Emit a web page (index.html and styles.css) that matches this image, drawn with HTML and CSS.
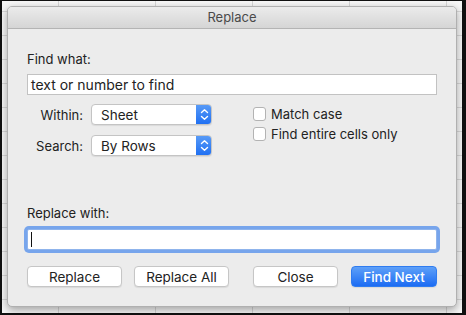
FILE: index.html
```html
<!DOCTYPE html>
<html lang="en">
<head>
    <meta charset="UTF-8">
    <title>Replace</title>
    <link rel="stylesheet" href="styles.css">
</head>
<body>
    <div class="screen">
        <div class="dialog">
            <div class="titlebar">Replace</div>
            <div class="dialog-body">
                <div class="label">Find what:</div>
                <div class="field">text or number to find</div>

                <div class="options">
                    <div class="selects">
                        <span class="opt-label">Within:</span>
                        <div class="select">
                            <span>Sheet</span>
                            <span class="stepper">
                                <svg width="9" height="13" viewBox="0 0 9 13"><path d="M1.5 4.5 L4.5 1.8 L7.5 4.5 M1.5 8.5 L4.5 11.2 L7.5 8.5" fill="none" stroke="#fff" stroke-width="1.4" stroke-linecap="round" stroke-linejoin="round"/></svg>
                            </span>
                        </div>
                        <span class="opt-label">Search:</span>
                        <div class="select">
                            <span>By Rows</span>
                            <span class="stepper">
                                <svg width="9" height="13" viewBox="0 0 9 13"><path d="M1.5 4.5 L4.5 1.8 L7.5 4.5 M1.5 8.5 L4.5 11.2 L7.5 8.5" fill="none" stroke="#fff" stroke-width="1.4" stroke-linecap="round" stroke-linejoin="round"/></svg>
                            </span>
                        </div>
                    </div>
                    <div class="checks">
                        <label class="check"><span class="box"></span>Match case</label>
                        <label class="check"><span class="box"></span>Find entire cells only</label>
                    </div>
                </div>

                <div class="label replace-label">Replace with:</div>
                <div class="field focused"><span class="caret"></span></div>

                <div class="buttons">
                    <div class="btn-group">
                        <button class="btn wide">Replace</button>
                        <button class="btn wide">Replace All</button>
                    </div>
                    <div class="btn-group right">
                        <button class="btn">Close</button>
                        <button class="btn primary">Find Next</button>
                    </div>
                </div>
            </div>
        </div>
    </div>
</body>
</html>
```

FILE: styles.css
```css
/* Generale */
body {
    margin: 0;
    font-family: Inter, "Noto Sans", sans-serif;
    font-size: 13px;
    color: #222;
}

.screen {
    box-sizing: border-box;
    width: 466px;
    height: 315px;
    border-style: solid;
    border-color: #111;
    border-width: 1px 4px 2px 2px;
    padding: 5px 0 0 5px;
    background-color: #f7f7f7;
    background-image:
        repeating-linear-gradient(to right, transparent 0, transparent 56px, #d6d6d6 56px, #d6d6d6 57px, transparent 57px, transparent 97px),
        repeating-linear-gradient(to bottom, transparent 0, transparent 10px, #d9d9d9 10px, #d9d9d9 11px, transparent 11px, transparent 24px);
}

.dialog {
    box-sizing: border-box;
    width: 450px;
    height: 301px;
    background: #ececec;
    border: 1px solid #b0b0b0;
    border-radius: 5px;
    box-shadow: 0 3px 8px rgba(0, 0, 0, 0.35);
    overflow: hidden;
}

.titlebar {
    height: 21px;
    line-height: 21px;
    text-align: center;
    color: #4a4a4a;
    background: linear-gradient(to bottom, #ebebeb, #d5d5d5);
    border-bottom: 1px solid #b4b4b4;
}

.dialog-body {
    padding: 22px 19px 0 19px;
}

.label {
    line-height: 16px;
}

.field {
    box-sizing: border-box;
    height: 21px;
    margin-top: 7px;
    padding: 0 3px;
    font-size: 14px;
    line-height: 19px;
    background: #fff;
    border: 1px solid #c2c2c2;
    display: flex;
    align-items: center;
}

/* Opzioni */
.options {
    display: flex;
    margin-top: 9px;
    gap: 41px;
}

.selects {
    display: grid;
    grid-template-columns: 56px 121px;
    column-gap: 8px;
    row-gap: 10px;
    align-items: center;
}

.opt-label {
    text-align: right;
}

.select {
    box-sizing: border-box;
    height: 21px;
    display: flex;
    align-items: center;
    justify-content: space-between;
    padding-left: 9px;
    font-size: 13.5px;
    background: #fff;
    border: 1px solid #c4c4c4;
    border-radius: 4px;
    box-shadow: 0 1px 1px rgba(0, 0, 0, 0.08);
    overflow: hidden;
}

.stepper {
    width: 16px;
    height: 21px;
    margin-right: -1px;
    display: flex;
    align-items: center;
    justify-content: center;
    background: linear-gradient(to bottom, #5a9cf7, #1d6ef2);
}

.checks {
    display: flex;
    flex-direction: column;
}

.check {
    height: 20px;
    display: flex;
    align-items: center;
    gap: 5px;
}

.box {
    box-sizing: border-box;
    width: 13px;
    height: 14px;
    background: #fff;
    border: 1px solid #b3b3b3;
    border-radius: 3px;
}

.replace-label {
    margin-top: 49px;
}

.field.focused {
    margin-top: 8px;
    border-color: #8fb4ec;
    border-radius: 2px;
    box-shadow: 0 0 0 3px #77a5ec;
}

.caret {
    width: 1px;
    height: 15px;
    background: #111;
}

/* Pulsanti */
.buttons {
    display: flex;
    margin-top: 16px;
}

.btn-group {
    display: flex;
    gap: 12px;
}

.btn-group.right {
    margin-left: auto;
    gap: 13px;
}

.btn {
    box-sizing: border-box;
    height: 21px;
    width: 85px;
    padding: 0;
    font-family: inherit;
    font-size: 13.5px;
    color: #222;
    background: #fff;
    border: 1px solid #c6c6c6;
    border-radius: 4px;
    box-shadow: 0 1px 1px rgba(0, 0, 0, 0.08);
}

.btn.wide {
    width: 95px;
}

.btn.primary {
    width: 86px;
    color: #fff;
    font-weight: 500;
    border-color: #2f7cf0;
    background: linear-gradient(to bottom, #5ea0f8, #1c6cf3);
}
```
